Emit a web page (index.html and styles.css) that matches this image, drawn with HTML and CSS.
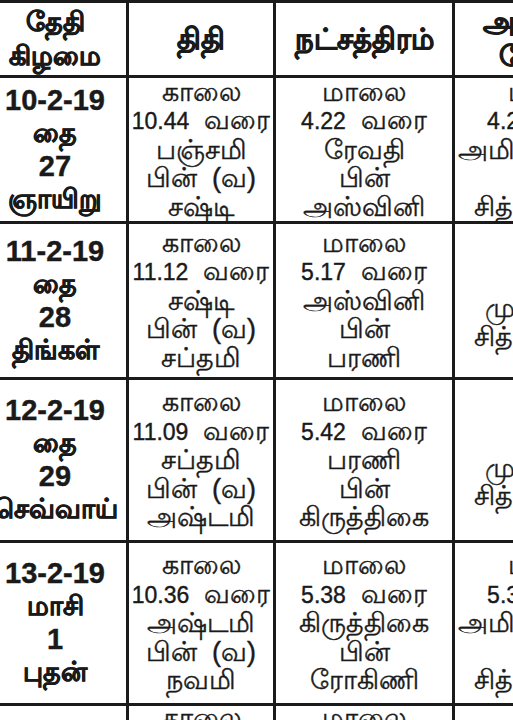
FILE: index.html
```html
<!DOCTYPE html>
<html lang="ta">
<head>
<meta charset="utf-8">
<title>பஞ்சாங்கம்</title>
<link rel="stylesheet" href="styles.css">
</head>
<body>
<div class="table">
  <div class="cell head"><span class="small">தேதி</span><span class="small">கிழமை</span></div>
  <div class="cell head"><span>திதி</span></div>
  <div class="cell head"><span>நட்சத்திரம்</span></div>
  <div class="cell head"><span>அமிர்தாதி</span><span>யோகம்</span></div>

  <div class="cell date"><span class="dnum">10-2-19</span><span>தை</span><span class="dnum">27</span><span>ஞாயிறு</span></div>
  <div class="cell"><span>காலை</span><span><span class="num">10.44</span>&nbsp; வரை</span><span>பஞ்சமி</span><span>பின்&nbsp; (வ)</span><span>சஷ்டி</span></div>
  <div class="cell"><span>மாலை</span><span><span class="num">4.22</span>&nbsp; வரை</span><span>ரேவதி</span><span>பின்</span><span>அஸ்வினி</span></div>
  <div class="cell"><span>மாலை</span><span><span class="num">4.22</span>&nbsp; வரை</span><span>அமிர்தயோகம்</span><span>பின்</span><span>சித்தயோகம்</span></div>

  <div class="cell date"><span class="dnum">11-2-19</span><span>தை</span><span class="dnum">28</span><span>திங்கள்</span></div>
  <div class="cell"><span>காலை</span><span><span class="num">11.12</span>&nbsp; வரை</span><span>சஷ்டி</span><span>பின்&nbsp; (வ)</span><span>சப்தமி</span></div>
  <div class="cell"><span>மாலை</span><span><span class="num">5.17</span>&nbsp; வரை</span><span>அஸ்வினி</span><span>பின்</span><span>பரணி</span></div>
  <div class="cell low"><span>நாள்</span><span>முழுவதும்</span><span>சித்தயோகம்</span></div>

  <div class="cell date"><span class="dnum">12-2-19</span><span>தை</span><span class="dnum">29</span><span>செவ்வாய்</span></div>
  <div class="cell"><span>காலை</span><span><span class="num">11.09</span>&nbsp; வரை</span><span>சப்தமி</span><span>பின்&nbsp; (வ)</span><span>அஷ்டமி</span></div>
  <div class="cell"><span>மாலை</span><span><span class="num">5.42</span>&nbsp; வரை</span><span>பரணி</span><span>பின்</span><span>கிருத்திகை</span></div>
  <div class="cell low"><span>நாள்</span><span>முழுவதும்</span><span>சித்தயோகம்</span></div>

  <div class="cell date"><span class="dnum">13-2-19</span><span>மாசி</span><span class="dnum">1</span><span>புதன்</span></div>
  <div class="cell"><span>காலை</span><span><span class="num">10.36</span>&nbsp; வரை</span><span>அஷ்டமி</span><span>பின்&nbsp; (வ)</span><span>நவமி</span></div>
  <div class="cell"><span>மாலை</span><span><span class="num">5.38</span>&nbsp; வரை</span><span>கிருத்திகை</span><span>பின்</span><span>ரோகிணி</span></div>
  <div class="cell"><span>மாலை</span><span><span class="num">5.38</span>&nbsp; வரை</span><span>அமிர்தயோகம்</span><span>பின்</span><span>சித்தயோகம்</span></div>

  <div class="cell top"></div>
  <div class="cell top"><span>காலை</span></div>
  <div class="cell top"><span>மாலை</span></div>
  <div class="cell top"></div>
</div>
</body>
</html>
```
FILE: styles.css
```css
html, body {
  margin: 0;
  padding: 0;
  background: #ffffff;
  overflow: hidden;
  width: 513px;
  height: 720px;
}

.table {
  display: grid;
  grid-template-columns: 142px 144px 176px 190px;
  grid-template-rows: 72px 143px 153px 160px 160px 60px;
  gap: 3px;
  padding-top: 3px;
  background: #1b1b1b;
  margin-left: -16px;
  width: max-content;
  font-family: "Liberation Sans", Arial, sans-serif;
  color: #1a1a1a;
}

.cell {
  background: #ffffff;
  display: flex;
  flex-direction: column;
  align-items: center;
  justify-content: center;
  font-size: 27px;
  line-height: 28.5px;
  white-space: nowrap;
  -webkit-text-stroke: 0.4px #1a1a1a;
}

.num {
  font-size: 23px;
}

.head {
  font-weight: bold;
  font-size: 29px;
  line-height: 34px;
  -webkit-text-stroke: 0.8px #1a1a1a;
}

.head .small {
  font-size: 27px;
}

.date {
  font-weight: bold;
  font-size: 27px;
  line-height: 33px;
  -webkit-text-stroke: 0.6px #1a1a1a;
}

.dnum {
  font-size: 29px;
  -webkit-text-stroke: 0.4px #1a1a1a;
}

.low {
  padding-top: 16px;
}

.top {
  justify-content: flex-start;
  padding-top: 0;
  line-height: 24px;
}
```
